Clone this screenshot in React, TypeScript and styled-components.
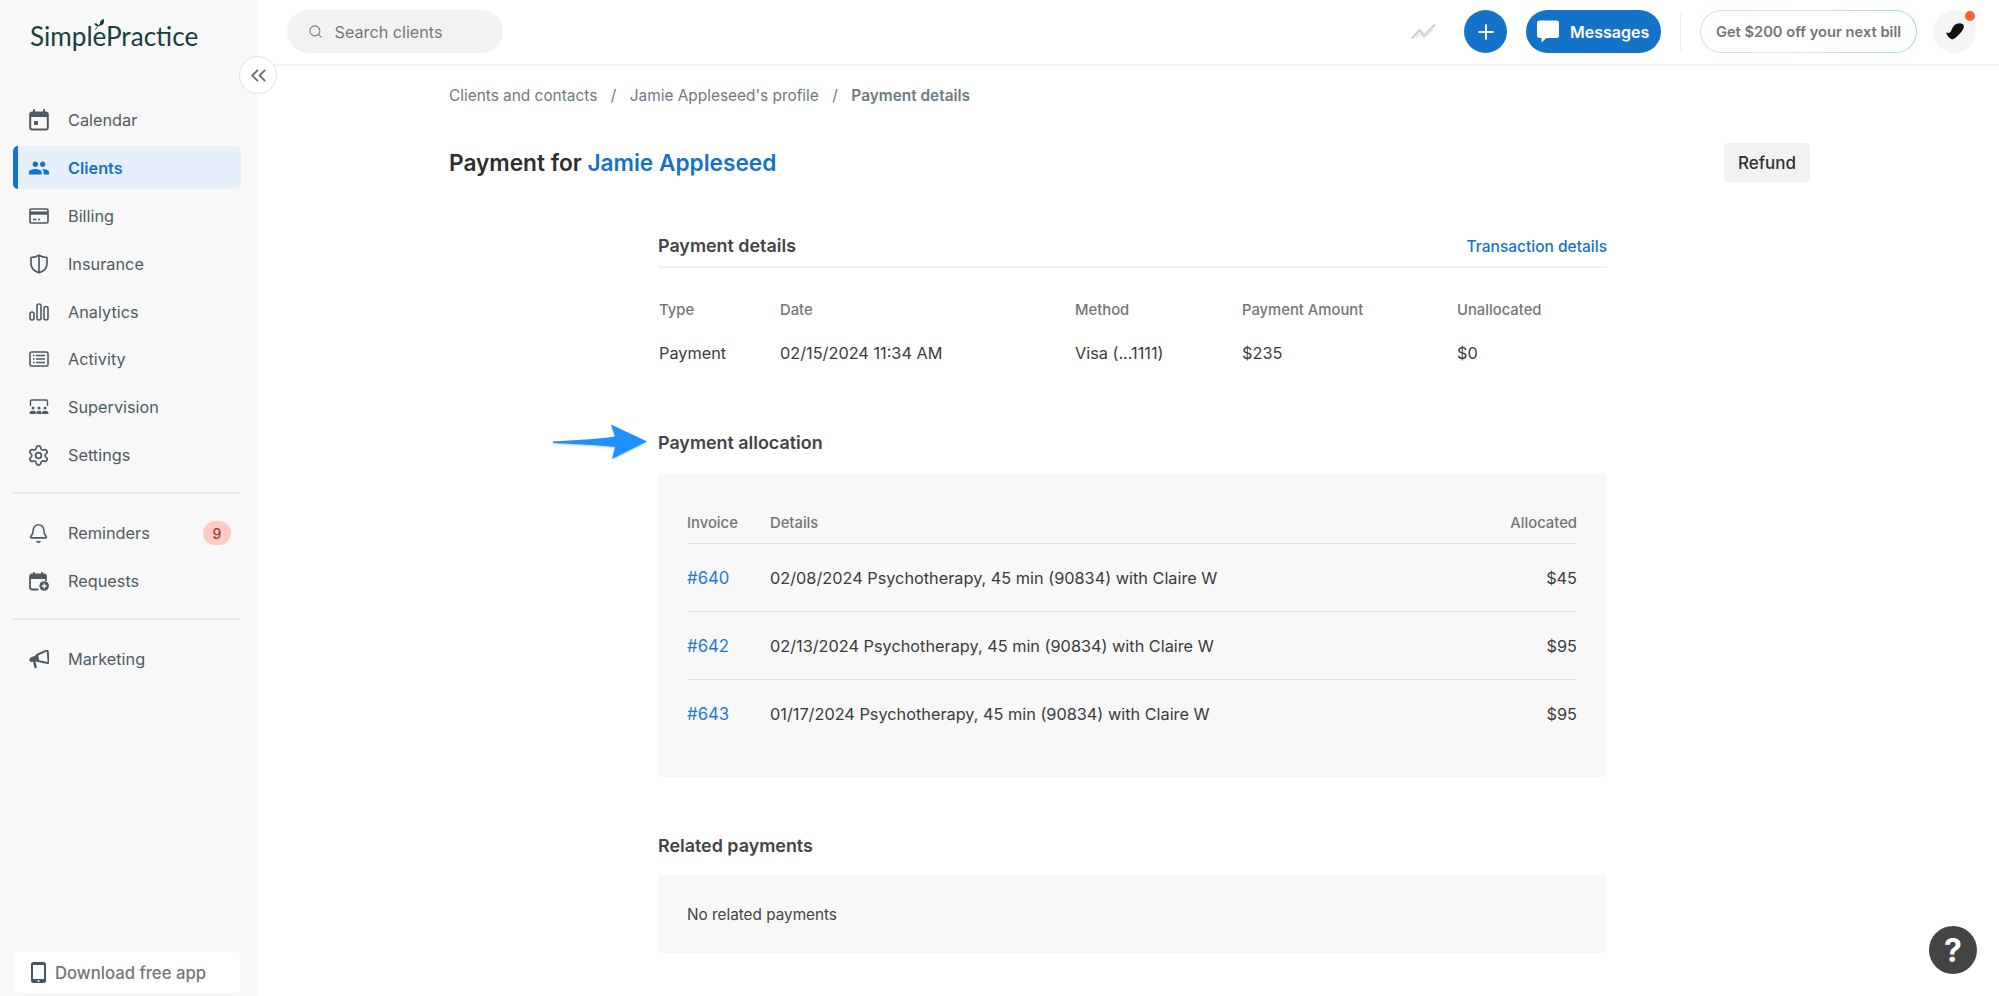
import React from "react";
import styled, { createGlobalStyle } from "styled-components";
import { Bell, ChevronsLeft, Search, Settings } from "lucide-react";
import { MdPeople } from "react-icons/md";

const GlobalStyle = createGlobalStyle`
  html, body {
    margin: 0;
    padding: 0;
    height: 100%;
    overflow: hidden;
    background: #fff;
    font-family: Inter, "Liberation Sans", sans-serif;
  }
  * { box-sizing: border-box; }
`;

const CalendarIcon = () => (
  <svg width="20" height="22" viewBox="0 0 20 22">
    <path d="M5 1v4M15 1v4" stroke="currentColor" strokeWidth="2" strokeLinecap="round" />
    <rect x="1.2" y="3.5" width="17.6" height="17" rx="2" fill="none" stroke="currentColor" strokeWidth="2" />
    <path d="M1.2 5.5a2 2 0 0 1 2-2h13.6a2 2 0 0 1 2 2V8H1.2z" fill="currentColor" />
    <rect x="5" y="12" width="4" height="4" fill="currentColor" />
  </svg>
);

const BillingIcon = () => (
  <svg width="20" height="16" viewBox="0 0 20 16">
    <rect x="1" y="1" width="18" height="14" rx="1.6" fill="none" stroke="currentColor" strokeWidth="1.7" />
    <rect x="1" y="3.5" width="18" height="3.2" fill="currentColor" />
    <path d="M4 11.5h3.5M9 11.5h2" stroke="currentColor" strokeWidth="1.5" />
  </svg>
);

const ShieldIcon = () => (
  <svg width="20" height="20" viewBox="0 0 20 20">
    <path d="M10 1.2c2.4 1.6 5 2.2 8 2.3v6c0 4.4-3.2 7.700-8 9.300-4.800-1.600-8-4.900-8-9.300v-6c3-.1 5.600-.7 8-2.300z" fill="none" stroke="currentColor" strokeWidth="1.700" strokeLinejoin="round" />
    <path d="M10 1.500v17" stroke="currentColor" strokeWidth="1.700" />
  </svg>
);

const AnalyticsIcon = () => (
  <svg width="20" height="18" viewBox="0 0 20 18">
    <rect x="1" y="9" width="4" height="8" rx="2" fill="none" stroke="currentColor" strokeWidth="1.600" />
    <rect x="8" y="1" width="4" height="16" rx="2" fill="none" stroke="currentColor" strokeWidth="1.600" />
    <rect x="15" y="3.500" width="4" height="13.500" rx="2" fill="none" stroke="currentColor" strokeWidth="1.600" />
  </svg>
);

const ActivityIcon = () => (
  <svg width="20" height="16" viewBox="0 0 20 16">
    <rect x="1" y="1" width="18" height="14" rx="1.600" fill="none" stroke="currentColor" strokeWidth="1.600" />
    <path d="M4 4.600h1.500M7 4.600h9M4 8h1.500M7 8h9M4 11.400h1.500M7 11.400h9" stroke="currentColor" strokeWidth="1.500" />
  </svg>
);

const SupervisionIcon = () => (
  <svg width="20" height="16" viewBox="0 0 20 16">
    <path d="M1.500 7V2a1 1 0 0 1 1-1h15a1 1 0 0 1 1 1v5" fill="none" stroke="currentColor" strokeWidth="1.400" />
    <circle cx="4" cy="9" r="1.500" fill="currentColor" />
    <circle cx="10" cy="9" r="1.500" fill="currentColor" />
    <circle cx="16" cy="9" r="1.500" fill="currentColor" />
    <path d="M.6 15v-1.300c0-1.300 1.500-2 3.400-2s3 .7 3 2V15zM7.400 15v-1.300c0-1.300 1-2 2.600-2s2.600.7 2.600 2V15zM13 15v-1.300c0-1.300 1.100-2 3-2s3.400.7 3.400 2V15z" fill="currentColor" />
  </svg>
);

const RequestsIcon = () => (
  <svg width="20" height="19" viewBox="0 0 20 19">
    <path d="M5 .8v3M13 .8v3" stroke="currentColor" strokeWidth="1.800" strokeLinecap="round" />
    <path d="M9.500 17.500H3a2 2 0 0 1-2-2V4.500a2 2 0 0 1 2-2h12a2 2 0 0 1 2 2V9" fill="none" stroke="currentColor" strokeWidth="1.800" />
    <path d="M1 4.500a2 2 0 0 1 2-2h12a2 2 0 0 1 2 2V7H1z" fill="currentColor" />
    <circle cx="15.200" cy="14" r="4.800" fill="currentColor" />
    <path d="M15.200 11.600v4.800M12.800 14h4.800" stroke="#f8f8f8" strokeWidth="1.400" />
  </svg>
);

const MarketingIcon = () => (
  <svg width="20" height="19" viewBox="0 0 20 19">
    <path d="M17.300.6c.8-.3 1.300.1 1.400.8l.9 10.600c.1.700-.4 1.200-1.200 1L8 10.800 7.800 5z" fill="none" stroke="currentColor" strokeWidth="2" strokeLinejoin="round" />
    <path d="M9.200 4.200 1.900 7.400C.6 8 .1 9 .4 10.200c.3 1.200 1.200 1.800 2.500 1.700l1.100-.1 1.300 5.400c.2.800.8 1.100 1.500 1 .8-.2 1.100-.8.900-1.500l-1.200-5.100 3.600-.6z" fill="currentColor" />
  </svg>
);

const BubbleIcon = () => (
  <svg width="22" height="23" viewBox="0 0 22 23">
    <path d="M2.500.5h17A2.500 2.500 0 0 1 22 3v12.500a2.500 2.500 0 0 1-2.500 2.500H9.500L4.500 22.500V18h-2A2.500 2.500 0 0 1 0 15.500V3A2.500 2.500 0 0 1 2.500.5z" fill="#fff" />
  </svg>
);

const TrendIcon = () => (
  <svg width="25" height="17" viewBox="0 0 25 17">
    <path d="M1 15.500 8.500 7l4.500 5.500L24 1.500" fill="none" stroke="#cfcfcf" strokeWidth="2" strokeLinejoin="round" />
    <path d="M5 14.500 8.800 10.400 13 15 21.500 7" fill="none" stroke="#e4e4e4" strokeWidth="1.200" />
  </svg>
);

const PhoneIcon = () => (
  <svg width="15" height="21" viewBox="0 0 15 21">
    <path d="M2.500 0h10A2.500 2.500 0 0 1 15 2.500v16a2.500 2.500 0 0 1-2.500 2.500h-10A2.500 2.500 0 0 1 0 18.500v-16A2.500 2.500 0 0 1 2.500 0zM2 3v14h11V3z" fill="#46555f" fillRule="evenodd" />
    <circle cx="7.500" cy="18.900" r="1" fill="#fff" />
  </svg>
);

const LeafIcon = () => (
  <svg width="11" height="11" viewBox="0 0 11 11">
    <path d="M1 10.500C1.600 9 2.500 8 3.800 7.200 2.200 7.400.8 6.400.4 4.300c1.900-.2 3.400.6 4 2.300C5 5.800 5.600 5.300 6 4.700 5.600 2.800 6.800.8 9.700 0c.9 2.600.3 5.300-2.300 6.200-1 .4-2 .4-2.900 1-1.200.8-2 1.900-2.500 3.300z" fill="#17403f" />
  </svg>
);

const AvatarMark = () => (
  <svg width="18" height="17" viewBox="0 0 18 17">
    <path d="M0 9.200c1.800 1.200 3.800.8 5-1C6.300 6 6.800 2.200 10.800.7 14-.5 17.500.3 17.900 3c.3 2.400-2 5.500-4.500 8-2 2-4 4-6.300 5.300C4.300 16.600 1 13 0 9.200z" fill="#111" />
  </svg>
);

const ArrowIcon = () => (
  <svg width="95" height="36" viewBox="0 0 95 36" style={{ filter: "drop-shadow(0 1px 1px rgba(0,0,0,.2))" }}>
    <path d="M0 17.500C22 16 44 15.500 62 12.500L58 .5 94 17.500 59 35 62 23C44 21 22 20 0 19z" fill="#1e90ff" />
  </svg>
);

const navTop = [
  { label: "Calendar", icon: <CalendarIcon /> },
  { label: "Clients", icon: <MdPeople size={22} />, active: true },
  { label: "Billing", icon: <BillingIcon /> },
  { label: "Insurance", icon: <ShieldIcon /> },
  { label: "Analytics", icon: <AnalyticsIcon /> },
  { label: "Activity", icon: <ActivityIcon /> },
  { label: "Supervision", icon: <SupervisionIcon /> },
  { label: "Settings", icon: <Settings size={23} strokeWidth={1.8} /> },
];

const details = [
  { head: "Type", value: "Payment" },
  { head: "Date", value: "02/15/2024 11:34 AM" },
  { head: "Method", value: "Visa (...1111)" },
  { head: "Payment Amount", value: "$235" },
  { head: "Unallocated", value: "$0" },
];

const allocations = [
  { invoice: "#640", details: "02/08/2024 Psychotherapy, 45 min (90834) with Claire W", amount: "$45" },
  { invoice: "#642", details: "02/13/2024 Psychotherapy, 45 min (90834) with Claire W", amount: "$95" },
  { invoice: "#643", details: "01/17/2024 Psychotherapy, 45 min (90834) with Claire W", amount: "$95" },
];

const App = () => (
  <Shell>
    <GlobalStyle />
    <Sidebar>
      <LogoRow>
        <Logo>
          SimplePractice
          <LeafSpot>
            <LeafIcon />
          </LeafSpot>
        </Logo>
      </LogoRow>
      <CollapseButton>
        <ChevronsLeft size={25} strokeWidth={1.7} />
      </CollapseButton>
      <NavList>
        {navTop.map(({ label, icon, active }) => (
          <NavItem key={label} $active={active}>
            <NavIcon>{icon}</NavIcon>
            {label}
          </NavItem>
        ))}
      </NavList>
      <NavDivider />
      <NavList>
        <NavItem>
          <NavIcon>
            <Bell size={21} strokeWidth={1.8} />
          </NavIcon>
          Reminders
          <Badge>9</Badge>
        </NavItem>
        <NavItem>
          <NavIcon>
            <RequestsIcon />
          </NavIcon>
          Requests
        </NavItem>
      </NavList>
      <NavDivider />
      <NavList>
        <NavItem>
          <NavIcon>
            <MarketingIcon />
          </NavIcon>
          Marketing
        </NavItem>
      </NavList>
      <DownloadButton>
        <PhoneIcon />
        Download free app
      </DownloadButton>
    </Sidebar>
    <Main>
      <TopBar>
        <SearchBox>
          <Search size={15} strokeWidth={1.7} color="#777" />
          Search clients
        </SearchBox>
        <TopActions>
          <TrendIcon />
          <PlusButton>
            <svg width="18" height="18" viewBox="0 0 18 18">
              <path d="M9 2v14M2 9h14" stroke="#fff" strokeWidth="1.800" strokeLinecap="round" />
            </svg>
          </PlusButton>
          <MessagesButton>
            <BubbleIcon />
            Messages
          </MessagesButton>
          <TopDivider />
          <PromoButton>Get $200 off your next bill</PromoButton>
          <Avatar>
            <AvatarMark />
            <AvatarDot />
          </Avatar>
        </TopActions>
      </TopBar>
      <Content>
        <Breadcrumbs>
          <span>Clients and contacts</span>
          <Slash>/</Slash>
          <span>Jamie Appleseed's profile</span>
          <Slash>/</Slash>
          <strong>Payment details</strong>
        </Breadcrumbs>
        <TitleRow>
          <PageTitle>
            Payment for <BlueLink>Jamie Appleseed</BlueLink>
          </PageTitle>
          <RefundButton>Refund</RefundButton>
        </TitleRow>
        <Sections>
          <DetailsHeader>
            <SectionTitle>Payment details</SectionTitle>
            <TransactionLink>Transaction details</TransactionLink>
          </DetailsHeader>
          <DetailsGrid>
            {details.map(({ head }) => (
              <ColHead key={head}>{head}</ColHead>
            ))}
            {details.map(({ head, value }) => (
              <BodyText key={head}>{value}</BodyText>
            ))}
          </DetailsGrid>
          <AllocationTitle>
            <ArrowSpot>
              <ArrowIcon />
            </ArrowSpot>
            Payment allocation
          </AllocationTitle>
          <AllocationPanel>
            <AllocationHead>
              <ColHead>Invoice</ColHead>
              <ColHead>Details</ColHead>
              <ColHead>Allocated</ColHead>
            </AllocationHead>
            {allocations.map((row, i) => (
              <AllocationRow key={row.invoice} $last={i === allocations.length - 1}>
                <InvoiceLink>{row.invoice}</InvoiceLink>
                <BodyText>{row.details}</BodyText>
                <BodyText>{row.amount}</BodyText>
              </AllocationRow>
            ))}
          </AllocationPanel>
          <RelatedTitle>Related payments</RelatedTitle>
          <RelatedPanel>No related payments</RelatedPanel>
        </Sections>
      </Content>
    </Main>
    <HelpButton>?</HelpButton>
  </Shell>
);

export default App;

const Shell = styled.div`
  display: flex;
  height: 996px;
  width: 1999px;
  position: relative;
  overflow: hidden;
`;

const Sidebar = styled.aside`
  position: relative;
  width: 257px;
  flex: none;
  display: flex;
  flex-direction: column;
  background: #f8f8f8;
  padding: 0 16px 3px 13px;
`;

const LogoRow = styled.div`
  height: 98.500px;
  padding: 18px 0 0 17px;
`;

const Logo = styled.div`
  position: relative;
  display: inline-block;
  font-family: Lato, "Open Sans", sans-serif;
  font-size: 26.100px;
  line-height: 36px;
  color: #17403f;
`;

const LeafSpot = styled.span`
  position: absolute;
  left: 64px;
  top: 1px;
  line-height: 0;
`;

const CollapseButton = styled.div`
  position: absolute;
  left: 239px;
  top: 56px;
  width: 38px;
  height: 38px;
  border-radius: 50%;
  background: #fff;
  border: 1px solid #e2e2e2;
  color: #6b6b6b;
  display: flex;
  align-items: center;
  justify-content: center;
  z-index: 2;
`;

const NavList = styled.nav`
  display: flex;
  flex-direction: column;
  gap: 4.900px;
`;

const NavItem = styled.div<{ $active?: boolean }>`
  height: 43px;
  display: flex;
  align-items: center;
  font-size: 16.300px;
  padding-left: ${(p) => (p.$active ? "11px" : "16px")};
  padding-right: 10px;
  border-left: ${(p) => (p.$active ? "5px solid #1572c9" : "none")};
  border-radius: 5px;
  background: ${(p) => (p.$active ? "#e6f0fa" : "transparent")};
  color: ${(p) => (p.$active ? "#1572c9" : "#4f5b62")};
  font-weight: ${(p) => (p.$active ? 600 : 400)};
`;

const NavIcon = styled.span`
  width: 19px;
  margin-right: 20px;
  flex: none;
  display: flex;
  align-items: center;
  justify-content: center;
  svg {
    flex: none;
  }
`;

const NavDivider = styled.div`
  height: 2px;
  margin: 15.500px 0 17.500px 0;
  background: #e8e8e8;
`;

const Badge = styled.span`
  margin-left: auto;
  width: 28px;
  height: 24px;
  border-radius: 12px;
  background: #fdcbc3;
  color: #9a3b2e;
  font-size: 14px;
  font-weight: 500;
  display: flex;
  align-items: center;
  justify-content: center;
`;

const DownloadButton = styled.div`
  margin: auto 1px 0 2px;
  height: 41px;
  background: #fff;
  border-radius: 4px;
  display: flex;
  align-items: center;
  gap: 9px;
  padding-left: 16px;
  color: #757575;
  font-size: 16.700px;
  font-weight: 500;
`;

const Main = styled.div`
  flex: 1;
  min-width: 0;
  display: flex;
  flex-direction: column;
`;

const TopBar = styled.header`
  height: 66px;
  flex: none;
  border-bottom: 2px solid #f3f3f3;
  display: flex;
  align-items: flex-start;
  justify-content: space-between;
  padding: 10px 23px 0 29.500px;
`;

const SearchBox = styled.div`
  width: 216px;
  height: 43px;
  border-radius: 22px;
  background: #f2f2f2;
  display: flex;
  align-items: center;
  gap: 12px;
  padding-left: 21px;
  color: #777;
  font-size: 16.200px;
`;

const TopActions = styled.div`
  display: flex;
  align-items: center;
  height: 43px;
`;

const PlusButton = styled.div`
  width: 43px;
  height: 43px;
  margin-left: 28px;
  border-radius: 50%;
  background: #1572c9;
  display: flex;
  align-items: center;
  justify-content: center;
`;

const MessagesButton = styled.div`
  width: 135px;
  height: 43px;
  margin-left: 19px;
  border-radius: 22px;
  background: #1572c9;
  color: #fff;
  font-size: 16px;
  font-weight: 600;
  display: flex;
  align-items: center;
  gap: 11px;
  padding-left: 11px;
`;

const TopDivider = styled.div`
  width: 1px;
  height: 38px;
  margin: 0 19px;
  background: #efefef;
`;

const PromoButton = styled.div`
  width: 217px;
  height: 43px;
  border-radius: 22px;
  border: 1.500px solid transparent;
  background: linear-gradient(#fff, #fff) padding-box,
    linear-gradient(90deg, #fbcfcf, #e8dde6 50%, #93dff5) border-box;
  color: #757575;
  font-size: 14.700px;
  font-weight: 600;
  display: flex;
  align-items: center;
  justify-content: center;
  white-space: nowrap;
`;

const Avatar = styled.div`
  position: relative;
  width: 43px;
  height: 43px;
  margin-left: 16px;
  border-radius: 50%;
  background: #f5f5f5;
  display: flex;
  align-items: center;
  justify-content: center;
`;

const AvatarDot = styled.span`
  position: absolute;
  right: 1px;
  top: 1px;
  width: 10px;
  height: 10px;
  border-radius: 50%;
  background: #f8632f;
`;

const Content = styled.main`
  padding: 0 189px 0 192px;
`;

const Breadcrumbs = styled.div`
  margin-top: 19.500px;
  height: 20px;
  display: flex;
  align-items: center;
  color: #6d7b83;
  font-size: 15.400px;
  line-height: 20px;
  strong {
    font-weight: 600;
  }
`;

const Slash = styled.span`
  margin: 0 13.500px;
`;

const TitleRow = styled.div`
  margin-top: 37.500px;
  height: 39px;
  display: flex;
  align-items: center;
  justify-content: space-between;
`;

const PageTitle = styled.h1`
  margin: 0;
  font-size: 22.650px;
  font-weight: 600;
  color: #2e2e2e;
`;

const BlueLink = styled.span`
  color: #1572c9;
`;

const RefundButton = styled.div`
  width: 86px;
  height: 39px;
  border-radius: 4px;
  background: #f2f2f2;
  color: #303030;
  font-size: 17px;
  font-weight: 500;
  display: flex;
  align-items: center;
  justify-content: center;
`;

const Sections = styled.div`
  margin: 52px 0 0 209px;
  width: 949px;
`;

const SectionTitle = styled.h2`
  margin: 0;
  font-size: 17.900px;
  line-height: 24px;
  font-weight: 600;
  color: #444;
`;

const DetailsHeader = styled.div`
  display: flex;
  justify-content: space-between;
  align-items: center;
  padding-bottom: 8px;
  border-bottom: 2px solid #f2f2f2;
`;

const TransactionLink = styled.span`
  color: #1572c9;
  font-size: 15.500px;
  font-weight: 500;
`;

const DetailsGrid = styled.div`
  margin-top: 32px;
  padding-left: 1px;
  display: grid;
  grid-template-columns: 121px 295px 167px 215px 1fr;
  row-gap: 22.500px;
`;

const ColHead = styled.div`
  color: #757575;
  font-size: 14.800px;
  line-height: 20px;
  font-weight: 500;
`;

const BodyText = styled.div`
  color: #3b3b3b;
  font-size: 16.300px;
  line-height: 20px;
`;

const AllocationTitle = styled(SectionTitle)`
  position: relative;
  margin-top: 68.500px;
`;

const ArrowSpot = styled.span`
  position: absolute;
  left: -105px;
  top: -7px;
  line-height: 0;
`;

const AllocationPanel = styled.div`
  margin-top: 18px;
  height: 304px;
  padding: 40px 30px 0 29px;
  background: #f8f8f8;
  border-radius: 4px;
`;

const AllocationHead = styled.div`
  display: grid;
  grid-template-columns: 83px 1fr auto;
  padding-bottom: 10px;
  border-bottom: 1.500px solid #e0e0e0;
`;

const AllocationRow = styled.div<{ $last?: boolean }>`
  display: grid;
  grid-template-columns: 83px 1fr auto;
  align-items: center;
  height: 68px;
  border-bottom: ${(p) => (p.$last ? "none" : "1.500px solid #e0e0e0")};
`;

const InvoiceLink = styled.span`
  color: #1f7ad1;
  font-size: 16.800px;
`;

const RelatedTitle = styled(SectionTitle)`
  margin-top: 56.500px;
`;

const RelatedPanel = styled.div`
  margin-top: 17px;
  height: 78px;
  padding: 1px 0 0 29px;
  display: flex;
  align-items: center;
  background: #f8f8f8;
  border-radius: 4px;
  color: #444;
  font-size: 15.300px;
`;

const HelpButton = styled.div`
  position: absolute;
  left: 1929px;
  top: 926px;
  width: 48px;
  height: 48px;
  border-radius: 50%;
  background: #444;
  color: #fff;
  font-size: 32px;
  font-weight: 700;
  display: flex;
  align-items: center;
  justify-content: center;
`;
